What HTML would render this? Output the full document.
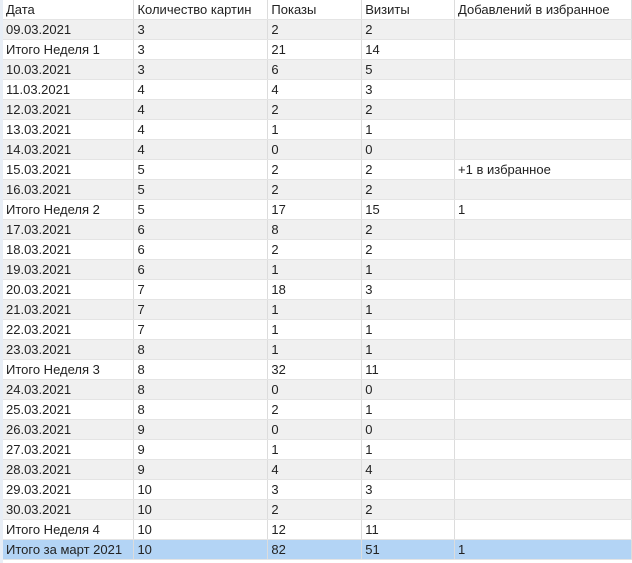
<!DOCTYPE html><html><head><meta charset="utf-8"><style>
body{margin:0;width:632px;height:563px;background:#fff;font-family:"Liberation Sans",sans-serif;font-size:13px;color:#222;overflow:hidden;position:relative}
table{border-collapse:collapse;position:absolute;left:3px;top:0;table-layout:fixed}
td{height:19px;padding:0 0 0 3px;border-right:1px solid #dcdcdc;border-bottom:1px solid #e4e4e4;white-space:nowrap;overflow:hidden;line-height:19px}
tr:nth-child(even) td{background:#f0f0f0}
tr.sel td{background:#b3d4f5}
.lb{position:absolute;left:0;top:0;width:3px;height:563px;background:#e8eef6}
</style></head><body><div class="lb"></div>
<table>
<colgroup><col style="width:131px"><col style="width:134px"><col style="width:94px"><col style="width:93px"><col style="width:177px"></colgroup>
<tr><td>Дата</td><td>Количество картин</td><td>Показы</td><td>Визиты</td><td>Добавлений в избранное</td></tr>
<tr><td>09.03.2021</td><td>3</td><td>2</td><td>2</td><td></td></tr>
<tr><td>Итого Неделя 1</td><td>3</td><td>21</td><td>14</td><td></td></tr>
<tr><td>10.03.2021</td><td>3</td><td>6</td><td>5</td><td></td></tr>
<tr><td>11.03.2021</td><td>4</td><td>4</td><td>3</td><td></td></tr>
<tr><td>12.03.2021</td><td>4</td><td>2</td><td>2</td><td></td></tr>
<tr><td>13.03.2021</td><td>4</td><td>1</td><td>1</td><td></td></tr>
<tr><td>14.03.2021</td><td>4</td><td>0</td><td>0</td><td></td></tr>
<tr><td>15.03.2021</td><td>5</td><td>2</td><td>2</td><td>+1 в избранное</td></tr>
<tr><td>16.03.2021</td><td>5</td><td>2</td><td>2</td><td></td></tr>
<tr><td>Итого Неделя 2</td><td>5</td><td>17</td><td>15</td><td>1</td></tr>
<tr><td>17.03.2021</td><td>6</td><td>8</td><td>2</td><td></td></tr>
<tr><td>18.03.2021</td><td>6</td><td>2</td><td>2</td><td></td></tr>
<tr><td>19.03.2021</td><td>6</td><td>1</td><td>1</td><td></td></tr>
<tr><td>20.03.2021</td><td>7</td><td>18</td><td>3</td><td></td></tr>
<tr><td>21.03.2021</td><td>7</td><td>1</td><td>1</td><td></td></tr>
<tr><td>22.03.2021</td><td>7</td><td>1</td><td>1</td><td></td></tr>
<tr><td>23.03.2021</td><td>8</td><td>1</td><td>1</td><td></td></tr>
<tr><td>Итого Неделя 3</td><td>8</td><td>32</td><td>11</td><td></td></tr>
<tr><td>24.03.2021</td><td>8</td><td>0</td><td>0</td><td></td></tr>
<tr><td>25.03.2021</td><td>8</td><td>2</td><td>1</td><td></td></tr>
<tr><td>26.03.2021</td><td>9</td><td>0</td><td>0</td><td></td></tr>
<tr><td>27.03.2021</td><td>9</td><td>1</td><td>1</td><td></td></tr>
<tr><td>28.03.2021</td><td>9</td><td>4</td><td>4</td><td></td></tr>
<tr><td>29.03.2021</td><td>10</td><td>3</td><td>3</td><td></td></tr>
<tr><td>30.03.2021</td><td>10</td><td>2</td><td>2</td><td></td></tr>
<tr><td>Итого Неделя 4</td><td>10</td><td>12</td><td>11</td><td></td></tr>
<tr class="sel"><td>Итого за март 2021</td><td>10</td><td>82</td><td>51</td><td>1</td></tr>
</table></body></html>
